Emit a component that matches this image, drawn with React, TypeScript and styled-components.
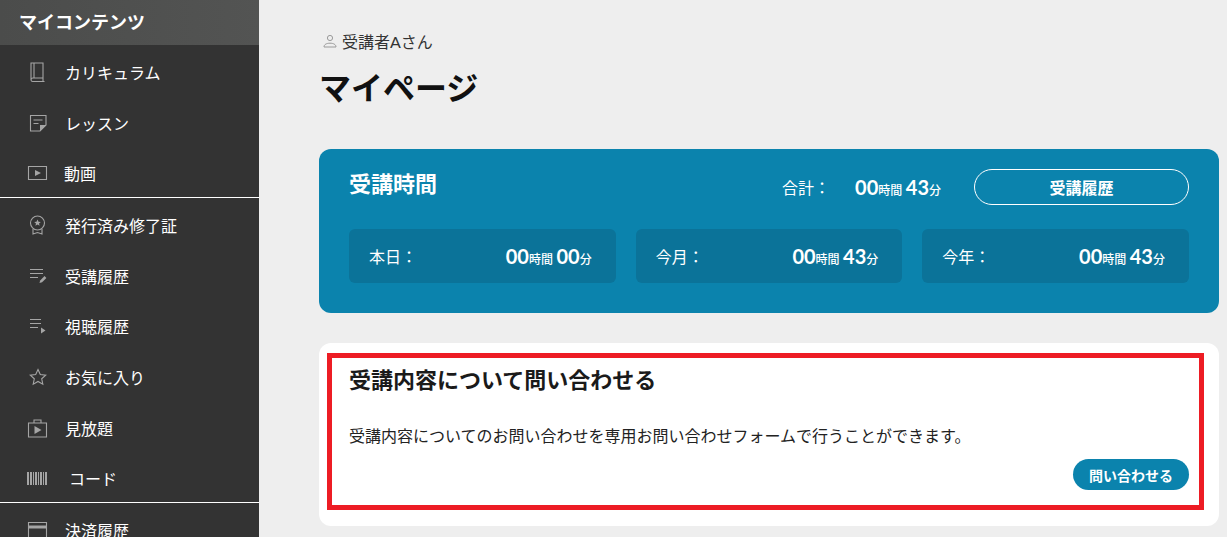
import { ReactNode } from "react";
import styled, { createGlobalStyle } from "styled-components";

const GlobalStyle = createGlobalStyle`
    html, body {
        margin: 0;
        padding: 0;
        height: 537px;
        overflow: hidden;
        background: #eeeeee;
        font-family: "Lato", "Noto Sans CJK JP", sans-serif;
    }
    * {
        box-sizing: border-box;
    }
`;

const Page = styled.div`
    display: flex;
    width: 1227px;
    height: 537px;
    overflow: hidden;
`;

const Sidebar = styled.nav`
    flex: 0 0 259px;
    height: 537px;
    overflow: hidden;
    background: #333333;
    color: #ffffff;
`;

const SideHeader = styled.div`
    height: 45px;
    padding: 0 0 3px 19px;
    display: flex;
    align-items: center;
    font-size: 18px;
    font-weight: 700;
    background: linear-gradient(90deg, #4b4c4b, #535453);
`;

const SideList = styled.ul`
    list-style: none;
    margin: 0;
    padding: 0;
`;

const SideItem = styled.li<{ $h: number; $top?: number; $divider?: boolean }>`
    height: ${({ $h }) => $h}px;
    padding-top: ${({ $top }) => $top || 0}px;
    display: flex;
    align-items: center;
    font-size: 16px;
    border-bottom: ${({ $divider }) => ($divider ? "1px solid #ffffff" : "none")};
`;

const IconSlot = styled.span`
    flex: 0 0 65px;
    padding-left: 27px;
    display: flex;
    align-items: center;
    color: #a5a5a5;
`;

const SideLabel = styled.span<{ $shift?: number }>`
    margin-left: ${({ $shift }) => $shift || 0}px;
    white-space: nowrap;
`;

const Main = styled.main`
    flex: 1;
    min-width: 0;
    padding: 30px 8px 0 60px;
`;

const UserRow = styled.div`
    display: flex;
    align-items: center;
    gap: 5px;
    height: 22px;
    padding-left: 4px;
    font-size: 16px;
    color: #333333;
`;

const PageTitle = styled.h1`
    margin: 13px 0 0;
    height: 84px;
    font-size: 32px;
    line-height: 46px;
    font-weight: 700;
    color: #111111;
`;

const TimeCard = styled.section`
    height: 164px;
    padding: 20px 30px 0;
    border-radius: 12px;
    background: #0b83ad;
    color: #ffffff;
`;

const TimeHeader = styled.div`
    display: flex;
    align-items: center;
    height: 36px;
`;

const TimeTitle = styled.h2`
    margin: 0 auto 10px 0;
    font-size: 22px;
    font-weight: 700;
`;

const TotalLabel = styled.span`
    font-size: 16px;
    margin-right: 25px;
`;

const HistoryButton = styled.button`
    width: 215px;
    height: 36px;
    margin-left: 33px;
    border: 1px solid #ffffff;
    border-radius: 18px;
    background: transparent;
    color: #ffffff;
    font: 700 16px "Lato", "Noto Sans CJK JP", sans-serif;
`;

const PeriodGrid = styled.div`
    display: grid;
    grid-template-columns: repeat(3, 1fr);
    gap: 20px;
    margin-top: 24px;
`;

const PeriodBox = styled.div`
    height: 54px;
    padding: 0 24px 0 20px;
    display: flex;
    align-items: center;
    justify-content: space-between;
    border-radius: 6px;
    background: #0b7399;
    font-size: 16px;
`;

const Duration = styled.span`
    font-size: 20px;
    font-weight: 700;
    white-space: nowrap;
`;

const Unit = styled.small`
    font-size: 12px;
    font-weight: 500;
    margin-right: 3.5px;

    &:last-child {
        margin-right: 0;
    }
`;

const InquiryCard = styled.section`
    height: 183px;
    margin-top: 30px;
    padding: 10px 15px 16px 8px;
    border-radius: 12px;
    background: #ffffff;
`;

const Highlight = styled.div`
    height: 157px;
    padding: 4px 10px 0 17px;
    border: 5px solid #ed1c24;
    display: flex;
    flex-direction: column;
`;

const InquiryTitle = styled.h2`
    margin: 0;
    font-size: 22px;
    line-height: 36px;
    font-weight: 700;
    color: #1a1a1a;
`;

const InquiryText = styled.p`
    margin: 27px 0 0;
    font-size: 16px;
    line-height: 22px;
    color: #222222;
`;

const InquiryButton = styled.button`
    align-self: flex-end;
    width: 116px;
    height: 31px;
    margin-top: 12px;
    padding: 0;
    border: none;
    border-radius: 16px;
    background: #0b83ad;
    color: #ffffff;
    font: 700 14px "Lato", "Noto Sans CJK JP", sans-serif;
`;

const Line = ({ children, w = 22, h = 22 }: { children: ReactNode; w?: number; h?: number }) => (
    <svg width={w} height={h} viewBox={`0 0 ${w} ${h}`} fill="none" stroke="currentColor" strokeWidth="1.1">
        {children}
    </svg>
);

const icons: Record<string, ReactNode> = {
    book: (
        <Line>
            <path d="M4 2h12v15H6a2 2 0 0 0-2 2zM4 19a1.800 1.800 0 0 0 2 1.500h11.500M7 2v15M16 17v3.500" />
        </Line>
    ),
    note: (
        <Line>
            <path d="M13 19H3.500V3.500h15.500v9.500z" />
            <path d="M6.500 8h9M6.500 11.500h5" />
            <path d="M13 19v-6h6z" fill="currentColor" stroke="none" />
        </Line>
    ),
    play: (
        <Line>
            <path d="M1.500 4.500h18v13h-18z" />
            <path d="M8 8l6 3-6 3z" fill="currentColor" stroke="none" />
        </Line>
    ),
    medal: (
        <Line>
            <circle cx="10.500" cy="9" r="7" />
            <path d="M10.500 5.500l1 2.200 2.300.2-1.800 1.500.6 2.300-2.100-1.200-2.100 1.200.6-2.300-1.800-1.500 2.300-.2z" fill="currentColor" stroke="none" />
            <path d="M6 15v5l4.500-1.500 4.500 1.500v-5" />
        </Line>
    ),
    listPen: (
        <Line>
            <path d="M3 4.500h13M3 8.500h13M3 12.500h8" />
            <path d="M12.500 18l.7-2.600 4.300-4.300 1.900 1.900-4.300 4.300z" fill="currentColor" stroke="none" />
        </Line>
    ),
    listPlay: (
        <Line>
            <path d="M3 4.500h11M3 8.500h11M3 12.500h8" />
            <path d="M14 12.500l4.500 3-4.500 3z" fill="currentColor" stroke="none" />
        </Line>
    ),
    star: (
        <Line>
            <path d="M11 3.500l2.300 5 5.400.6-4 3.700 1.100 5.400-4.800-2.800-4.800 2.800 1.100-5.400-4-3.700 5.400-.6z" />
        </Line>
    ),
    bag: (
        <Line>
            <path d="M1.500 6h18v14h-18zM7 6V3h7v3" />
            <path d="M7.500 9l7 4-7 4z" fill="currentColor" stroke="none" />
        </Line>
    ),
    barcode: (
        <Line w={20} h={13}>
            <path
                d="M0 0h2v13H0zM3 0h2v13H3zM6 0h1v13H6zM8 0h2v13H8zM11 0h1v13h-1zM13 0h2v13h-2zM16 0h1v13h-1zM18 0h2v13h-2z"
                fill="#a5a5a5"
                stroke="none"
            />
        </Line>
    ),
    card: (
        <Line>
            <path d="M1.500 3.500h18v16h-18z" />
            <path d="M1.500 6.500h18v3h-18z" fill="currentColor" stroke="none" />
        </Line>
    ),
};

const menu = [
    { icon: "book", label: "カリキュラム", h: 54 },
    { icon: "note", label: "レッスン", h: 48 },
    { icon: "play", label: "動画", h: 51, top: 2, shift: -1, divider: true },
    { icon: "medal", label: "発行済み修了証", h: 54 },
    { icon: "listPen", label: "受講履歴", h: 48 },
    { icon: "listPlay", label: "視聴履歴", h: 52 },
    { icon: "star", label: "お気に入り", h: 50 },
    { icon: "bag", label: "見放題", h: 52 },
    { icon: "barcode", label: "コード", h: 49, shift: 4, divider: true },
    { icon: "card", label: "決済履歴", h: 54 },
];

const Time = ({ hours, minutes }: { hours: string; minutes: string }) => (
    <Duration>
        {hours}
        <Unit>時間</Unit>
        {minutes}
        <Unit>分</Unit>
    </Duration>
);

const periods = [
    { label: "本日：", hours: "00", minutes: "00" },
    { label: "今月：", hours: "00", minutes: "43" },
    { label: "今年：", hours: "00", minutes: "43" },
];

export default function App() {
    return (
        <>
            <GlobalStyle />
            <Page>
                <Sidebar>
                    <SideHeader>マイコンテンツ</SideHeader>
                    <SideList>
                        {menu.map((m) => (
                            <SideItem key={m.label} $h={m.h} $top={m.top} $divider={m.divider}>
                                <IconSlot>{icons[m.icon]}</IconSlot>
                                <SideLabel $shift={m.shift}>{m.label}</SideLabel>
                            </SideItem>
                        ))}
                    </SideList>
                </Sidebar>
                <Main>
                    <UserRow>
                        <svg width="14" height="14" viewBox="0 0 14 14" fill="none" stroke="#9a9a9a" strokeWidth="1">
                            <circle cx="7" cy="4" r="2.6" />
                            <path d="M1 13c0-2.600 2.600-3.800 6-3.800s6 1.200 6 3.800z" />
                        </svg>
                        受講者Aさん
                    </UserRow>
                    <PageTitle>マイページ</PageTitle>
                    <TimeCard>
                        <TimeHeader>
                            <TimeTitle>受講時間</TimeTitle>
                            <TotalLabel>合計：</TotalLabel>
                            <Time hours="00" minutes="43" />
                            <HistoryButton>受講履歴</HistoryButton>
                        </TimeHeader>
                        <PeriodGrid>
                            {periods.map((p) => (
                                <PeriodBox key={p.label}>
                                    {p.label}
                                    <Time hours={p.hours} minutes={p.minutes} />
                                </PeriodBox>
                            ))}
                        </PeriodGrid>
                    </TimeCard>
                    <InquiryCard>
                        <Highlight>
                            <InquiryTitle>受講内容について問い合わせる</InquiryTitle>
                            <InquiryText>受講内容についてのお問い合わせを専用お問い合わせフォームで行うことができます。</InquiryText>
                            <InquiryButton>問い合わせる</InquiryButton>
                        </Highlight>
                    </InquiryCard>
                </Main>
            </Page>
        </>
    );
}
